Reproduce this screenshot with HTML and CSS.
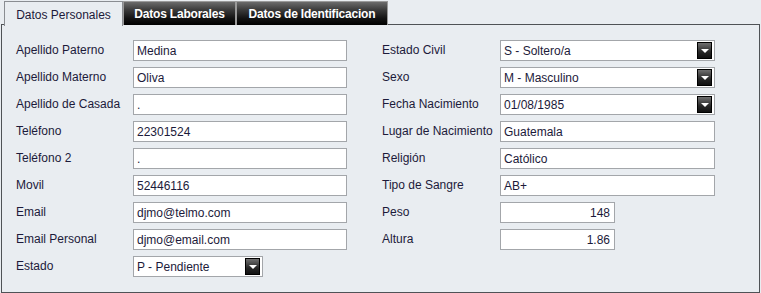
FILE: index.html
```html
<!DOCTYPE html>
<html lang="es">
<head>
<meta charset="utf-8">
<title>Datos Personales</title>
<link rel="stylesheet" href="styles.css">
</head>
<body>
<div class="tabs">
  <div class="tab active">Datos Personales</div>
  <div class="tab dark tab-lab">Datos Laborales</div>
  <div class="tab dark tab-id">Datos de Identificacion</div>
</div>
<div class="panel">
  <div class="col left">
    <label>Apellido Paterno</label><div class="field">Medina</div>
    <label>Apellido Materno</label><div class="field">Oliva</div>
    <label>Apellido de Casada</label><div class="field">.</div>
    <label>Teléfono</label><div class="field">22301524</div>
    <label>Teléfono 2</label><div class="field">.</div>
    <label>Movil</label><div class="field">52446116</div>
    <label>Email</label><div class="field">djmo@telmo.com</div>
    <label>Email Personal</label><div class="field">djmo@email.com</div>
    <label>Estado</label><div class="field select short">P - Pendiente<span class="btn"></span></div>
  </div>
  <div class="col right">
    <label>Estado Civil</label><div class="field select">S - Soltero/a<span class="btn"></span></div>
    <label>Sexo</label><div class="field select">M - Masculino<span class="btn"></span></div>
    <label>Fecha Nacimiento</label><div class="field select">01/08/1985<span class="btn"></span></div>
    <label>Lugar de Nacimiento</label><div class="field">Guatemala</div>
    <label>Religión</label><div class="field">Católico</div>
    <label>Tipo de Sangre</label><div class="field">AB+</div>
    <label>Peso</label><div class="field num">148</div>
    <label>Altura</label><div class="field num">1.86</div>
  </div>
</div>
</body>
</html>
```
FILE: styles.css
```css
* { box-sizing: border-box; }
html, body { margin: 0; padding: 0; }
body {
  background: #e9edf1;
  font-family: "Liberation Sans", Arial, sans-serif;
  font-size: 12px;
  color: #1c1a3a;
  width: 761px;
  height: 293px;
  overflow: hidden;
}
.tabs {
  display: flex;
  padding: 1px 0 0 4px;
  height: 24px;
  position: relative;
  z-index: 1;
}
.tab {
  height: 24px;
  display: flex;
  align-items: center;
  justify-content: center;
  padding-top: 1px;
}
.tab.active {
  width: 119px;
  background: #e9edf1;
  border: 1px solid #8a8d92;
  border-bottom: none;
  height: 25px;
  color: #1c1a3a;
}
.tab.dark {
  background: linear-gradient(#6b6b6b 0%, #3a3a3a 35%, #141414 70%, #000 100%);
  border: 1px solid #9a9a9a;
  border-bottom: none;
  color: #fff;
  font-weight: bold;
  letter-spacing: -0.2px;
}
.tab-lab { width: 113px; }
.tab-id { width: 152px; }
.panel {
  margin-left: 1px;
  width: 759px;
  height: 269px;
  border: 1px solid #4f5256;
  display: flex;
  gap: 35px;
  padding: 15px 0 0 14px;
}
.col {
  display: grid;
  grid-auto-rows: 21px;
  row-gap: 6px;
  align-content: start;
  align-items: center;
}
.col.left { grid-template-columns: 117px 214px; }
.col.right { grid-template-columns: 118px 215px; }
label { white-space: nowrap; padding-bottom: 2px; }
.field {
  height: 21px;
  background: #fff;
  border: 1px solid #a3a6aa;
  padding: 2px 0 0 3px;
  white-space: nowrap;
  position: relative;
  line-height: 16px;
}
.field.num { width: 115px; text-align: right; padding: 2px 4px 0 0; }
.field.short { width: 130px; }
.btn {
  position: absolute;
  right: 2px;
  top: 1px;
  width: 15px;
  height: 17px;
  border: 1px solid #000;
  background: linear-gradient(#707070, #262626 60%, #111);
}
.btn::after {
  content: "";
  position: absolute;
  left: 3px;
  top: 6px;
  border-left: 4px solid transparent;
  border-right: 4px solid transparent;
  border-top: 4px solid #fff;
}
```
